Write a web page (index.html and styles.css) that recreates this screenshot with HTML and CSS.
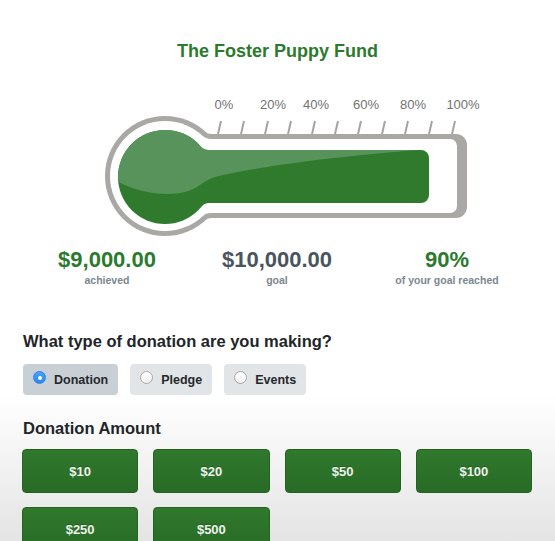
FILE: index.html
```html
<!DOCTYPE html>
<html>
<head>
<meta charset="utf-8">
<link rel="stylesheet" href="styles.css">
</head>
<body>
<div class="page">
  <h1 class="title">The Foster Puppy Fund</h1>
  <svg class="thermo" width="555" height="150" viewBox="0 90 555 150">
    <defs>
      <clipPath id="greenClip">
        <circle cx="165" cy="177" r="47"/>
        <rect x="165" y="150" width="264" height="53" rx="8"/>
        <path d="M200.8 146.5 A10 10 0 0 0 208.4 150 L203.5 150 Z"/>
        <path d="M200.8 207.5 A10 10 0 0 1 208.4 203 L203.5 203 Z"/>
      </clipPath>
    </defs>
    <g class="ticks">
      <line x1="218" y1="134" x2="221" y2="121"/>
      <line x1="241" y1="134" x2="244" y2="121"/>
      <line x1="265" y1="134" x2="268" y2="121"/>
      <line x1="288" y1="134" x2="291" y2="121"/>
      <line x1="312" y1="134" x2="315" y2="121"/>
      <line x1="335" y1="134" x2="338" y2="121"/>
      <line x1="358" y1="134" x2="361" y2="121"/>
      <line x1="382" y1="134" x2="385" y2="121"/>
      <line x1="405" y1="134" x2="408" y2="121"/>
      <line x1="429" y1="134" x2="432" y2="121"/>
      <line x1="452" y1="134" x2="455" y2="121"/>
    </g>
    <g class="labels">
      <text x="224" y="109">0%</text>
      <text x="273" y="109">20%</text>
      <text x="316" y="109">40%</text>
      <text x="366" y="109">60%</text>
      <text x="413" y="109">80%</text>
      <text x="463" y="109">100%</text>
    </g>
    <g class="outline">
      <circle cx="165" cy="176" r="60"/>
      <rect x="165" y="134" width="302" height="84" rx="11"/>
      <path d="M205.7 131.9 A8 8 0 0 0 211.1 134 L207.85 134 Z"/>
      <path d="M205.7 220.1 A8 8 0 0 1 211.1 218 L207.85 218 Z"/>
    </g>
    <g class="inner">
      <circle cx="165" cy="176" r="55"/>
      <rect x="165" y="139" width="292" height="74" rx="7"/>
      <path d="M202.3 135.6 A13 13 0 0 0 211.1 139 L205.7 139 Z"/>
      <path d="M202.3 216.4 A13 13 0 0 1 211.1 213 L205.7 213 Z"/>
    </g>
    <g class="green">
      <circle cx="165" cy="177" r="47"/>
      <rect x="165" y="150" width="264" height="53" rx="8"/>
      <path d="M200.8 146.5 A10 10 0 0 0 208.4 150 L203.5 150 Z"/>
      <path d="M200.8 207.5 A10 10 0 0 1 208.4 203 L203.5 203 Z"/>
    </g>
    <path class="shine" clip-path="url(#greenClip)" d="M100 100 L100 168 C120 190 160 198 185 192 C200 188 200 182 215 177 C260 166 340 156 420 150 L440 100 Z"/>
  </svg>

  <div class="stats">
    <div class="stat">
      <div class="value green-text">$9,000.00</div>
      <div class="label">achieved</div>
    </div>
    <div class="stat">
      <div class="value slate-text">$10,000.00</div>
      <div class="label">goal</div>
    </div>
    <div class="stat">
      <div class="value green-text">90%</div>
      <div class="label">of your goal reached</div>
    </div>
  </div>

  <h2 class="question">What type of donation are you making?</h2>
  <div class="types">
    <div class="pill selected"><span class="radio on"></span><span>Donation</span></div>
    <div class="pill"><span class="radio"></span><span>Pledge</span></div>
    <div class="pill"><span class="radio"></span><span>Events</span></div>
  </div>

  <h2 class="amount-title">Donation Amount</h2>
  <div class="amounts">
    <div class="amt">$10</div>
    <div class="amt">$20</div>
    <div class="amt">$50</div>
    <div class="amt">$100</div>
    <div class="amt">$250</div>
    <div class="amt">$500</div>
  </div>
</div>
</body>
</html>
```

FILE: styles.css
```css
html, body {
  margin: 0;
  padding: 0;
}
body {
  width: 555px;
  height: 541px;
  overflow: hidden;
  font-family: "Liberation Sans", Arial, sans-serif;
  background: linear-gradient(to bottom, #ffffff 0, #ffffff 395px, #e4e4e4 541px);
}
.page {
  padding: 40px 23px 0 22px;
}
.title {
  margin: 0;
  font-size: 18px;
  line-height: 22px;
  font-weight: bold;
  color: #2c7a2d;
  text-align: center;
  padding-left: 1px;
}
.thermo {
  display: block;
  margin: 28px 0 0 -22px;
}
.ticks line {
  stroke: #a4a4a2;
  stroke-width: 2;
}
.labels text {
  font-family: "Liberation Sans", Arial, sans-serif;
  font-size: 13px;
  fill: #727272;
  text-anchor: middle;
}
.outline circle, .outline rect, .outline path {
  fill: #a9a8a5;
}
.inner circle, .inner rect, .inner path {
  fill: #ffffff;
}
.green circle, .green rect, .green path {
  fill: #2f7a2d;
}
.shine {
  fill: #57935a;
}
.stats {
  display: grid;
  grid-template-columns: repeat(3, 1fr);
  margin-top: 7px;
  text-align: center;
}
.value {
  font-size: 22px;
  line-height: 26px;
  font-weight: bold;
}
.green-text { color: #2c7a2d; }
.slate-text { color: #4a545e; }
.label {
  font-size: 10.5px;
  line-height: 14px;
  font-weight: bold;
  color: #7c8790;
}
.question {
  margin: 44px 0 0 1px;
  font-size: 16.5px;
  line-height: 20px;
  font-weight: bold;
  color: #222528;
}
.types {
  display: flex;
  gap: 12px;
  margin-top: 13px;
  padding-left: 1px;
}
.pill {
  display: flex;
  align-items: center;
  gap: 8px;
  height: 31px;
  padding: 0 10px 0 10px;
  border-radius: 4px;
  background: #e2e5e8;
  font-size: 12.5px;
  font-weight: bold;
  color: #25282b;
}
.pill.selected {
  background: #c9d0d5;
}
.radio {
  box-sizing: border-box;
  width: 13px;
  height: 13px;
  border-radius: 50%;
  border: 1px solid #a9a9a9;
  background: linear-gradient(#ffffff, #f1f1f1);
  margin-bottom: 4px;
  display: flex;
  align-items: center;
  justify-content: center;
}
.radio.on {
  border: 1px solid #2a84ee;
  background: linear-gradient(#4aa0fb, #2c86f0);
}
.radio.on::after {
  content: "";
  width: 4px;
  height: 4px;
  border-radius: 50%;
  background: #ffffff;
}
.amount-title {
  margin: 23px 0 0 1px;
  font-size: 16.5px;
  line-height: 20px;
  font-weight: bold;
  color: #222528;
}
.amounts {
  display: grid;
  grid-template-columns: repeat(4, 1fr);
  column-gap: 15px;
  row-gap: 14px;
  margin-top: 11px;
}
.amt {
  box-sizing: border-box;
  height: 44px;
  display: flex;
  align-items: center;
  justify-content: center;
  border: 1px solid #24631f;
  border-radius: 4px;
  background: linear-gradient(#30792d, #286b26);
  color: #eef4ec;
  font-size: 13px;
  font-weight: bold;
  text-shadow: 0 -1px 0 rgba(0,0,0,0.2);
}
```
